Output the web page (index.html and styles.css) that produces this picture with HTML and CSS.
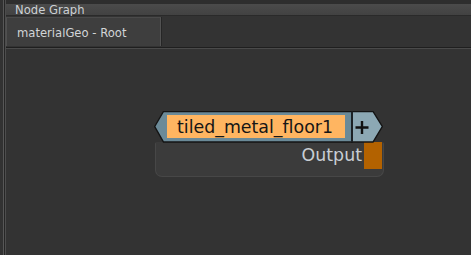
FILE: index.html
```html
<!DOCTYPE html>
<html>
<head>
<meta charset="utf-8">
<link rel="stylesheet" href="styles.css">
</head>
<body>
<div class="app">
  <div class="gutter"></div>
  <div class="main">
    <div class="titlebar">Node Graph</div>
    <div class="tabrow">
      <div class="tab">materialGeo - Root</div>
    </div>
    <div class="canvas">
      <div class="node">
        <div class="node-header">
          <svg class="node-shape" width="229" height="32" viewBox="0 0 229 32">
            <path d="M0.7 15.5 L9.5 0.5 L198 0.5 L198 31 L9.5 31 Z" fill="#6b8a98" stroke="#141414" stroke-width="1.4"/>
            <path d="M198 0.5 L219 0.5 L228.3 15.5 L219 31 L198 31 Z" fill="#8ca8b4" stroke="#141414" stroke-width="1.4"/>
            <line x1="198" y1="0.5" x2="198" y2="31" stroke="#1c2226" stroke-width="2"/>
            <path d="M201.5 16.5 H214.5 M208 10 V23" stroke="#111" stroke-width="2.4"/>
          </svg>
          <div class="node-name">tiled_metal_floor1</div>
        </div>
        <div class="node-body">
          <span class="port-label">Output</span>
          <div class="port"></div>
        </div>
      </div>
    </div>
  </div>
</div>
</body>
</html>
```
FILE: styles.css
```css
html, body {
  margin: 0;
  padding: 0;
  background: #333333;
  width: 471px;
  height: 255px;
  overflow: hidden;
}

.app {
  display: flex;
  width: 471px;
  height: 255px;
  font-family: "DejaVu Sans", Verdana, sans-serif;
}

.gutter {
  width: 6px;
  flex: none;
  background: linear-gradient(to right, #323232 0 3px, #575757 3px 4px, #262626 4px 5px, #4d4d4d 5px 6px);
}

.main {
  flex: 1;
  display: flex;
  flex-direction: column;
}

.titlebar {
  height: 11px;
  border-top: 4px solid #2e2e2e;
  border-bottom: 1px solid #2a2a2a;
  background: linear-gradient(#4b4b4b, #424242);
  padding-left: 9px;
  font-size: 11.6px;
  line-height: 13px;
  color: #cdd1d4;
  white-space: nowrap;
}

.tabrow {
  height: 30px;
  padding-top: 1px;
  box-sizing: content-box;
  border-bottom: 1px solid #1f1f1f;
  background: #333333;
  display: flex;
}

.tab {
  width: 155px;
  height: 29px;
  box-sizing: border-box;
  background: #3e3e3e;
  border-left: 1px solid #505050;
  border-top: 1px solid #4a4a4a;
  border-right: 1px solid #525252;
  box-shadow: 1px 0 0 #262626;
  padding-left: 10px;
  padding-top: 2px;
  font-size: 11.6px;
  line-height: 26px;
  color: #d2d5d7;
  white-space: nowrap;
}

.canvas {
  flex: 1;
  position: relative;
  border-top: 1px solid #4a4a4a;
  background: #333333;
}

.node {
  position: absolute;
  left: 148px;
  top: 62px;
  width: 230px;
  display: flex;
  flex-direction: column;
}

.node-header {
  position: relative;
  height: 31px;
  display: flex;
  align-items: flex-start;
}

.node-shape {
  position: absolute;
  left: 0;
  top: 0;
}

.node-name {
  position: relative;
  margin-left: 13px;
  margin-top: 4px;
  width: 178px;
  height: 23px;
  box-sizing: border-box;
  background: #ffb561;
  padding-left: 10px;
  padding-top: 1.5px;
  font-size: 17.4px;
  line-height: 21px;
  color: #161616;
  white-space: nowrap;
}

.node-body {
  margin-left: 1px;
  width: 229px;
  height: 35px;
  box-sizing: border-box;
  background: #3b3b3b;
  border: 1px solid #474747;
  border-top-color: #3b3b3b;
  border-radius: 2px 2px 7px 7px;
  display: flex;
  justify-content: flex-end;
  align-items: flex-start;
}

.port-label {
  font-size: 17.4px;
  line-height: 27px;
  color: #c8ced4;
  margin-right: 2px;
  margin-top: -1px;
}

.port {
  width: 18px;
  height: 27px;
  margin-top: -1px;
  margin-right: 1px;
  background: #b36200;
}
```
